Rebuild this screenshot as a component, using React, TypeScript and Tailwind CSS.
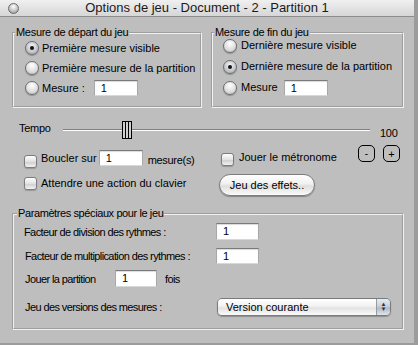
import React from 'react';

const sans = "font-['Liberation_Sans',Arial,sans-serif]";

const Radio: React.FC<{ checked?: boolean }> = ({ checked }) => (
  <span
    className={`w-[14px] h-[14px] rounded-full border border-[#6e6e6e] flex items-center justify-center shrink-0 shadow-[0_1px_1px_rgba(0,0,0,0.25)] ${
      checked
        ? 'bg-[radial-gradient(circle_at_50%_35%,#f4f4f4,#b9bcc2_70%,#9da1a8)]'
        : 'bg-[radial-gradient(circle_at_50%_30%,#ffffff,#dcdcdc_60%,#b8b8b8)]'
    }`}
  >
    {checked && <span className="w-[4px] h-[4px] rounded-full bg-[#111]" />}
  </span>
);

const Checkbox: React.FC = () => (
  <span className="w-[13px] h-[13px] rounded-[3px] border border-[#7c7c7c] shrink-0 bg-[linear-gradient(#ffffff,#e2e2e2_50%,#cfcfcf_55%,#f2f2f2)] shadow-[0_1px_1px_rgba(0,0,0,0.2)]" />
);

const Field: React.FC<{ w: number; className?: string }> = ({ className = '' }) => (
  <span
    className={`h-[16px] bg-white border border-t-[#7a7a7a] border-x-[#a8a8a8] border-b-[#d8d8d8] shadow-[inset_0_1px_1px_rgba(0,0,0,0.15)] text-[11px] leading-[14px] pl-[6px] text-black ${className}`}
  >
    1
  </span>
);

const App: React.FC = () => {
  return (
    <div className={`w-[418px] h-[345px] bg-[#9c9c9c] ${sans} text-black`}>
      <div className="w-[414px] h-[343px] bg-[#bebebe] flex flex-col">
        {/* title bar */}
        <div className="h-[17px] shrink-0 flex items-center bg-[linear-gradient(#f0f0f0,#d6d6d6)] border-b border-[#8c8c8c]">
          <span className="ml-[8px] w-[11px] h-[11px] rounded-full border border-[#6a6a6a] bg-[radial-gradient(circle_at_50%_30%,#ffffff,#c4c4c4_55%,#8d8d8d)] shrink-0" />
          <span className="flex-1 text-center text-[13px] leading-[16px] text-[#1a1a1a]">
            Options de jeu - Document - 2 - Partition 1
          </span>
          <span className="w-[19px] shrink-0" />
        </div>

        <div className="pl-[12px] flex flex-col">
          {/* top groups */}
          <div className="flex gap-[9px] mt-[9px]">
            <fieldset className="w-[190px] h-[82px] border-2 [border-style:groove] border-[#f2f2f2]">
              <legend className="ml-[1px] px-[1px] text-[11px] leading-[13px] tracking-[-0.3px]">Mesure de départ du jeu</legend>
              <div className="pl-[11px] -mt-[1px] flex flex-col">
                <div className="h-[20px] flex items-center gap-[3px] text-[11px]">
                  <Radio checked />
                  <span>Première mesure visible</span>
                </div>
                <div className="h-[20px] flex items-center gap-[3px] text-[11px]">
                  <Radio />
                  <span>Première mesure de la partition</span>
                </div>
                <div className="h-[20px] flex items-center gap-[3px] text-[11px]">
                  <Radio />
                  <span>Mesure :</span>
                  <Field w={44} className="w-[44px] ml-[6px]" />
                </div>
              </div>
            </fieldset>
            <fieldset className="w-[193px] h-[82px] border-2 [border-style:groove] border-[#f2f2f2]">
              <legend className="ml-[1px] px-[1px] text-[11px] leading-[13px] tracking-[-0.3px]">Mesure de fin du jeu</legend>
              <div className="pl-[10px] -mt-[4px] flex flex-col">
                <div className="h-[21px] flex items-center gap-[4px] text-[11px]">
                  <Radio />
                  <span>Dernière mesure visible</span>
                </div>
                <div className="h-[21px] flex items-center gap-[4px] text-[11px]">
                  <Radio checked />
                  <span>Dernière mesure de la partition</span>
                </div>
                <div className="h-[21px] flex items-center gap-[4px] text-[11px]">
                  <Radio />
                  <span>Mesure</span>
                  <Field w={44} className="w-[44px] ml-[2px]" />
                </div>
              </div>
            </fieldset>
          </div>

          {/* tempo */}
          <div className="flex items-start h-[18px] mt-[12px] text-[11px]">
            <span className="ml-[7px] w-[44px] mt-[1px] leading-[14px] tracking-[-0.3px]">Tempo</span>
            <div className="relative w-[307px] h-[18px]">
              <div className="absolute left-0 right-0 top-[9px] h-[1px] bg-[#7f7f7f]" />
              <div className="absolute left-0 right-0 top-[10px] h-[1px] bg-white" />
              <div className="absolute left-[59px] top-[1px] w-[10px] h-[18px] border border-black bg-[#cfcfcf] flex">
                <span className="flex-1 border-r border-black" />
                <span className="flex-1 border-r border-black" />
                <span className="flex-1" />
              </div>
            </div>
            <span className="ml-[10px] mt-[6px] leading-[14px] tracking-[-0.3px]">100</span>
          </div>

          {/* loop / metronome */}
          <div className="flex items-start h-[22px] mt-[7px] pl-[12px] text-[11px]">
            <div className="w-[197px] flex items-start shrink-0">
              <span className="mt-[10px] flex"><Checkbox /></span>
              <span className="ml-[4px] mt-[6px] leading-[14px]">Boucler sur</span>
              <Field w={44} className="w-[44px] ml-[2px] mt-[5px]" />
              <span className="ml-[5px] mt-[8px] leading-[14px] tracking-[-0.3px]">mesure(s)</span>
            </div>
            <span className="mt-[8px] flex"><Checkbox /></span>
            <span className="ml-[5px] mt-[5px] leading-[14px]">Jouer le métronome</span>
            <div className="ml-auto mr-[14px] flex gap-[8px]">
              <button className="w-[17px] h-[17px] rounded-[5px] border border-black text-[10px] leading-[14px] flex items-center justify-center">-</button>
              <button className="w-[17px] h-[17px] rounded-[5px] border border-black text-[11px] leading-[14px] flex items-center justify-center">+</button>
            </div>
          </div>

          {/* keyboard wait / effects */}
          <div className="flex items-start h-[23px] mt-[7px] pl-[12px] text-[11px]">
            <div className="w-[195px] flex items-start shrink-0">
              <span className="mt-[3px] flex"><Checkbox /></span>
              <span className="ml-[4px] mt-[2px] leading-[14px]">Attendre une action du clavier</span>
            </div>
            <button className="w-[96px] h-[22px] rounded-full border border-[#7d7d7d] bg-[linear-gradient(#ffffff,#f0f0f0_45%,#dedede_55%,#fbfbfb)] shadow-[0_1px_1px_rgba(0,0,0,0.3)] text-[11px] leading-[14px]">
              Jeu des effets..
            </button>
          </div>

          {/* special parameters */}
          <fieldset className="w-[392px] h-[123px] mt-[10px] border-2 [border-style:groove] border-[#f2f2f2]">
            <legend className="ml-[3px] px-[1px] text-[11px] leading-[13px] tracking-[-0.4px]">Paramètres spéciaux pour le jeu</legend>
            <div className="pl-[10px] flex flex-col text-[11px] tracking-[-0.6px]">
              <div className="flex items-center mt-[3px]">
                <span className="w-[192px] leading-[14px]">Facteur de division des rythmes :</span>
                <Field w={43} className="w-[43px] h-[17px] tracking-normal" />
              </div>
              <div className="flex items-center mt-[8px]">
                <span className="w-[192px] pl-[1px] leading-[14px]">Facteur de multiplication des rythmes :</span>
                <Field w={43} className="w-[43px] tracking-normal" />
              </div>
              <div className="flex items-center mt-[6px]">
                <span className="w-[91px] pl-[1px] leading-[14px]">Jouer la partition</span>
                <Field w={42} className="w-[42px] h-[17px] tracking-normal" />
                <span className="ml-[8px] leading-[14px]">fois</span>
              </div>
              <div className="flex items-center mt-[11px]">
                <span className="w-[193px] pl-[1px] leading-[14px]">Jeu des versions des mesures :</span>
                <div className="w-[174px] h-[18px] rounded-[5px] border border-[#7a7a7a] flex overflow-hidden shadow-[0_1px_1px_rgba(0,0,0,0.25)] tracking-normal">
                  <span className="flex-1 pl-[8px] leading-[16px] bg-[linear-gradient(#ffffff,#f2f2f2_45%,#e2e2e2_55%,#fafafa)]">Version courante</span>
                  <span className="w-[14px] border-l border-[#9a9a9a] bg-[linear-gradient(#e8edf3,#c3cbd6_50%,#aeb8c6_55%,#dfe5ec)] flex flex-col items-center justify-center text-[6px] leading-[5px] text-[#333]">
                    <span>▲</span>
                    <span>▼</span>
                  </span>
                </div>
              </div>
            </div>
          </fieldset>
        </div>
      </div>
    </div>
  );
};

export default App;
